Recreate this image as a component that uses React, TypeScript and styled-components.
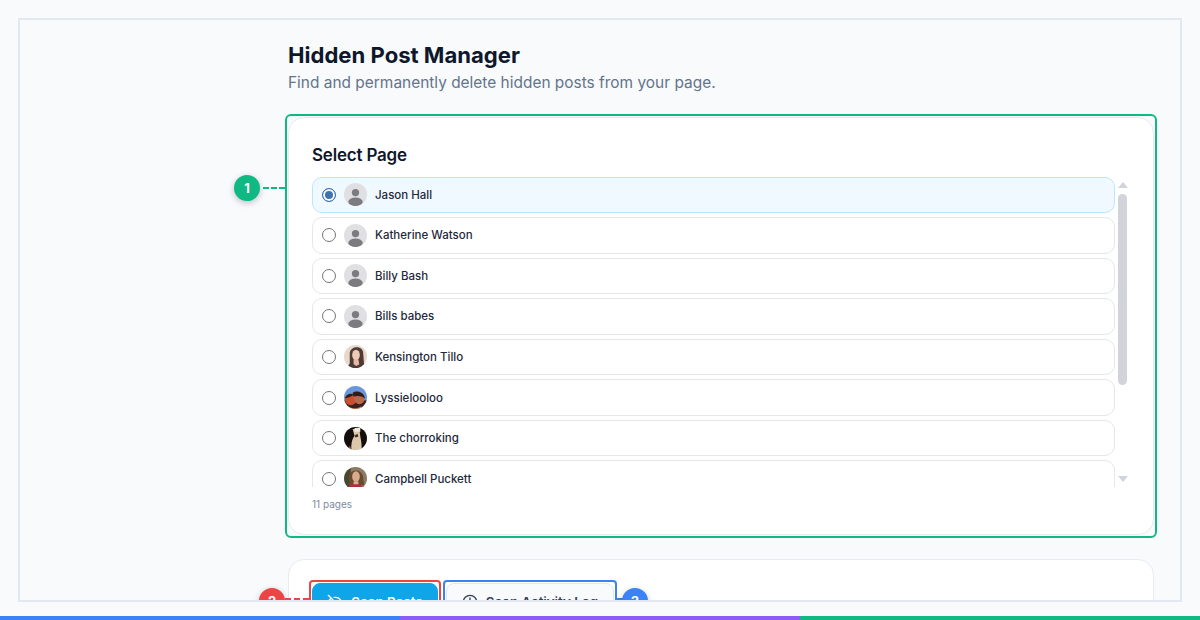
import React from 'react';
import styled, { createGlobalStyle } from 'styled-components';
import { Clock, EyeOff } from 'lucide-react';

const GlobalStyle = createGlobalStyle`
  html, body {
    margin: 0;
    padding: 0;
    background: #f8fafc;
    font-family: Inter, "Liberation Sans", sans-serif;
  }
`;

const Page = styled.div`
  display: flex;
  flex-direction: column;
  height: 620px;
  overflow: hidden;
  box-sizing: border-box;
`;

const Frame = styled.div`
  flex: 1;
  min-height: 0;
  margin: 18px 18px 14px;
  border: 2px solid #e2e8f0;
  overflow: hidden;
`;

const Content = styled.main`
  display: flex;
  flex-direction: column;
  margin: 0 26px 0 268px;
`;

const Title = styled.h1`
  margin: 20px 0 0;
  font-size: 22.1px;
  line-height: 30px;
  font-weight: 700;
  color: #0f172a;
`;

const Subtitle = styled.p`
  margin: 1px 0 0;
  font-size: 15.45px;
  line-height: 24px;
  color: #64748b;
`;

const Card = styled.section`
  position: relative;
  background: #ffffff;
  border: 1px solid #e8ebf0;
  border-radius: 16px;
  box-sizing: border-box;
`;

const PageCard = styled(Card)`
  margin-top: 22px;
  height: 418px;
  padding: 23px 23px 0;

  &::after {
    content: '';
    position: absolute;
    inset: -4px;
    border: 2px solid #10b981;
    border-radius: 6px;
    pointer-events: none;
  }
`;

const ScanCard = styled(Card)`
  margin-top: 24px;
  height: 120px;
  padding: 23px;
`;

const CardTitle = styled.h2`
  margin: 0 0 7.5px;
  font-size: 17px;
  line-height: 28px;
  font-weight: 600;
  letter-spacing: -0.2px;
  color: #0f172a;
`;

const ListArea = styled.div`
  position: relative;
  height: 310px;
  overflow: hidden;
  padding-right: 15px;
`;

const List = styled.ul`
  display: flex;
  flex-direction: column;
  gap: 4px;
  list-style: none;
  margin: 0;
  padding: 0;
`;

const Row = styled.li<{ $selected?: boolean }>`
  display: flex;
  align-items: center;
  gap: 7.5px;
  flex: none;
  height: 36.56px;
  box-sizing: border-box;
  padding: 0 9px;
  border: 1px solid ${(props) => (props.$selected ? '#bae6fd' : '#e5e7eb')};
  border-radius: 10px;
  background: ${(props) => (props.$selected ? '#f0f9ff' : '#ffffff')};
`;

const Radio = styled.span<{ $checked?: boolean }>`
  flex: none;
  width: 14px;
  height: 14px;
  border-radius: 50%;
  box-sizing: border-box;
  border: 1px solid ${(props) => (props.$checked ? '#3f72af' : '#767676')};
  background: ${(props) => (props.$checked ? '#3f72af' : '#ffffff')};
  box-shadow: ${(props) => (props.$checked ? 'inset 0 0 0 2px #ffffff' : 'none')};
`;

const AvatarSvg = styled.svg`
  flex: none;
  width: 23px;
  height: 23px;
  border-radius: 50%;
`;

const Name = styled.span`
  margin-left: 1px;
  font-size: 11.5px;
  line-height: 16px;
  font-weight: 500;
  color: #1e293b;
`;

const ScrollTrack = styled.div`
  position: absolute;
  top: 0;
  right: 0;
  bottom: 0;
  width: 15px;
  background: #ffffff;
`;

const ArrowUp = styled.span`
  position: absolute;
  top: 5px;
  left: 3px;
  border: 5px solid transparent;
  border-top: 0;
  border-bottom: 6px solid #d1d5db;
`;

const ArrowDown = styled.span`
  position: absolute;
  bottom: 5px;
  left: 3px;
  border: 5px solid transparent;
  border-bottom: 0;
  border-top: 6px solid #d1d5db;
`;

const Thumb = styled.span`
  position: absolute;
  top: 17px;
  left: 3px;
  width: 9px;
  height: 191px;
  border-radius: 5px;
  background: #d1d5db;
`;

const Count = styled.div`
  margin-top: 11.5px;
  font-size: 10px;
  line-height: 12px;
  color: #7c8aa0;
`;

const Badge = styled.span<{ $color: string }>`
  position: absolute;
  display: flex;
  align-items: center;
  justify-content: center;
  width: 26px;
  height: 26px;
  border-radius: 50%;
  background: ${(props) => props.$color};
  color: #ffffff;
  font-size: 13px;
  font-weight: 700;
  box-shadow: 0 2px 6px rgba(15, 23, 42, 0.25);
`;

const Connector = styled.span<{ $color: string }>`
  position: absolute;
  height: 0;
  border-top: 2px dashed ${(props) => props.$color};
`;

const PageBadge = styled(Badge)`
  left: -55px;
  top: 57px;
`;

const PageConnector = styled(Connector)`
  left: -26px;
  width: 22px;
  top: 69px;
`;

const Buttons = styled.div`
  display: flex;
  gap: 8px;
`;

const Highlight = styled.div<{ $color: string }>`
  position: relative;
  flex: none;

  &::after {
    content: '';
    position: absolute;
    inset: -3px;
    border: 2px solid ${(props) => props.$color};
    border-radius: 4px;
    pointer-events: none;
  }
`;

const ScanBadge = styled(Badge)`
  left: -53px;
  top: 5px;
`;

const ScanConnector = styled(Connector)`
  left: -27px;
  width: 24px;
  top: 15px;
`;

const LogBadge = styled(Badge)`
  right: -34px;
  top: 5px;
`;

const LogConnector = styled(Connector)`
  right: -9px;
  width: 6px;
  top: 15px;
`;

const Button = styled.button<{ $primary?: boolean }>`
  display: flex;
  align-items: center;
  justify-content: center;
  gap: 8px;
  height: 38px;
  box-sizing: border-box;
  padding: 0;
  white-space: nowrap;
  border: 1px solid ${(props) => (props.$primary ? '#0ea5e9' : '#e2e8f0')};
  border-radius: 8px;
  background: ${(props) => (props.$primary ? '#0ea5e9' : '#f8fafc')};
  color: ${(props) => (props.$primary ? '#ffffff' : '#334155')};
  font-family: inherit;
  font-size: 13.3px;
  font-weight: 600;
`;

const PrimaryButton = styled(Button)`
  width: 126px;
`;

const LogButton = styled(Button)`
  width: 168px;
`;

const BottomBar = styled.div`
  flex: none;
  display: grid;
  grid-template-columns: repeat(3, 1fr);
  height: 4px;
`;

const BarPart = styled.span<{ $color: string }>`
  background: ${(props) => props.$color};
`;

const DefaultAvatar = () => (
  <AvatarSvg viewBox="0 0 24 24">
    <rect width="24" height="24" fill="#e0e0e2" />
    <circle cx="12" cy="10" r="3.8" fill="#7c7c80" />
    <ellipse cx="12" cy="19.5" rx="7.5" ry="4.5" fill="#7c7c80" />
  </AvatarSvg>
);

// small blurred portraits standing in for the page photos
const Photo: React.FC<{ children: React.ReactNode }> = ({ children }) => (
  <AvatarSvg viewBox="0 0 24 24">
    <defs>
      <filter id="soft" x="-10%" y="-10%" width="120%" height="120%">
        <feGaussianBlur stdDeviation="0.6" />
      </filter>
    </defs>
    <g filter="url(#soft)">{children}</g>
  </AvatarSvg>
);

const KensingtonAvatar = () => (
  <Photo>
    <rect x="-2" y="-2" width="28" height="28" fill="#e8d8cc" />
    <path d="M6 8c1-7 13-8 14 0l1 13H6z" fill="#4f3a34" />
    <ellipse cx="12.5" cy="10.5" rx="4" ry="5.5" fill="#efc9b6" />
    <path d="M3 26c1-7 5-8 9-8s8 1 9 8z" fill="#4a3a38" />
    <path d="M10 15h5l1 5-3 2-3-2z" fill="#e6b8a2" />
  </Photo>
);

const LyssieAvatar = () => (
  <Photo>
    <rect x="-2" y="-2" width="28" height="28" fill="#6a96dc" />
    <rect x="-2" y="15" width="28" height="11" fill="#3a2420" />
    <ellipse cx="7" cy="14" rx="6" ry="6" fill="#c9502f" />
    <ellipse cx="16" cy="13" rx="5.5" ry="6" fill="#b8694c" />
    <path d="M9 7c4-3 12-1 13 6-4-3-8-3-12-2z" fill="#2e1c18" />
    <path d="M1 13c1-4 6-6 9-4-2 2-6 3-9 4z" fill="#2e1a16" />
    <path d="M4 21c4 3 10 3 14 0v5H4z" fill="#d07a5c" />
  </Photo>
);

const ChorrokingAvatar = () => (
  <Photo>
    <rect x="-2" y="-2" width="28" height="28" fill="#14110e" />
    <path d="M8 26c-1-7 0-13 3-17l-2-7h7l1 8c1 5 2 10 1 16z" fill="#dcc8aa" />
    <rect x="11" y="1" width="6" height="4" fill="#f2e8da" />
    <path d="M11 9l3-2 1 3-3 1z" fill="#3c2c20" />
    <path d="M3 26l3-7 3 7z" fill="#7a5c34" />
  </Photo>
);

const CampbellAvatar = () => (
  <Photo>
    <rect x="-2" y="-2" width="28" height="28" fill="#8a7c62" />
    <rect x="-2" y="-2" width="9" height="28" fill="#46472f" />
    <path d="M5 12C4 2 19 0 20 11l1 8H5z" fill="#6b4830" />
    <ellipse cx="12.5" cy="10" rx="4" ry="5.5" fill="#d8ab8c" />
    <path d="M3 26c1-7 6-10 9-10s8 3 9 10z" fill="#b32f3a" />
    <rect x="10" y="15" width="5" height="3" fill="#dcae92" />
  </Photo>
);

const pages = [
  { name: 'Jason Hall', avatar: <DefaultAvatar />, selected: true },
  { name: 'Katherine Watson', avatar: <DefaultAvatar /> },
  { name: 'Billy Bash', avatar: <DefaultAvatar /> },
  { name: 'Bills babes', avatar: <DefaultAvatar /> },
  { name: 'Kensington Tillo', avatar: <KensingtonAvatar /> },
  { name: 'Lyssielooloo', avatar: <LyssieAvatar /> },
  { name: 'The chorroking', avatar: <ChorrokingAvatar /> },
  { name: 'Campbell Puckett', avatar: <CampbellAvatar /> },
];

const App: React.FC = () => {
  return (
    <Page>
      <GlobalStyle />
      <Frame>
        <Content>
          <Title>Hidden Post Manager</Title>
          <Subtitle>Find and permanently delete hidden posts from your page.</Subtitle>

          <PageCard>
            <PageBadge $color="#10b981">1</PageBadge>
            <PageConnector $color="#10b981" />
            <CardTitle>Select Page</CardTitle>
            <ListArea>
              <List>
                {pages.map((page) => (
                  <Row key={page.name} $selected={page.selected}>
                    <Radio $checked={page.selected} />
                    {page.avatar}
                    <Name>{page.name}</Name>
                  </Row>
                ))}
              </List>
              <ScrollTrack>
                <ArrowUp />
                <Thumb />
                <ArrowDown />
              </ScrollTrack>
            </ListArea>
            <Count>11 pages</Count>
          </PageCard>

          <ScanCard>
            <Buttons>
              <Highlight $color="#ef4444">
                <ScanBadge $color="#ef4444">2</ScanBadge>
                <ScanConnector $color="#ef4444" />
                <PrimaryButton $primary>
                  <EyeOff size={16} />
                  Scan Posts
                </PrimaryButton>
              </Highlight>
              <Highlight $color="#3b82f6">
                <LogButton>
                  <Clock size={16} />
                  Scan Activity Log
                </LogButton>
                <LogConnector $color="#3b82f6" />
                <LogBadge $color="#3b82f6">3</LogBadge>
              </Highlight>
            </Buttons>
          </ScanCard>
        </Content>
      </Frame>
      <BottomBar>
        <BarPart $color="#3b82f6" />
        <BarPart $color="#8b5cf6" />
        <BarPart $color="#10b981" />
      </BottomBar>
    </Page>
  );
};

export default App;
